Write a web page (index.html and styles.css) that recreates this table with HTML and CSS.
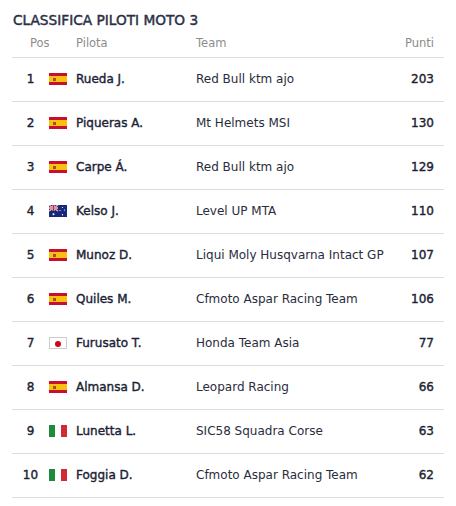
FILE: index.html
```html
<!DOCTYPE html>
<html>
<head>
<meta charset="utf-8">
<link rel="stylesheet" href="styles.css">
</head>
<body>
<div class="wrap">
  <h1 class="title">CLASSIFICA PILOTI MOTO 3</h1>
  <div class="row head">
    <div class="pos">Pos</div>
    <div class="flag-col"></div>
    <div class="name">Pilota</div>
    <div class="team">Team</div>
    <div class="pts">Punti</div>
  </div>

  <div class="row">
    <div class="pos">1</div>
    <div class="flag-col"><span class="flag es"><i class="coat"></i></span></div>
    <div class="name">Rueda J.</div>
    <div class="team">Red Bull ktm ajo</div>
    <div class="pts">203</div>
  </div>
  <div class="row">
    <div class="pos">2</div>
    <div class="flag-col"><span class="flag es"><i class="coat"></i></span></div>
    <div class="name">Piqueras A.</div>
    <div class="team">Mt Helmets MSI</div>
    <div class="pts">130</div>
  </div>
  <div class="row">
    <div class="pos">3</div>
    <div class="flag-col"><span class="flag es"><i class="coat"></i></span></div>
    <div class="name">Carpe Á.</div>
    <div class="team">Red Bull ktm ajo</div>
    <div class="pts">129</div>
  </div>
  <div class="row">
    <div class="pos">4</div>
    <div class="flag-col">
      <svg class="flag au" viewBox="0 0 36 24" width="18" height="12">
        <rect width="36" height="24" fill="#1a2a7a"/>
        <path d="M0 0L18 12M18 0L0 12" stroke="#fff" stroke-width="2.4"/>
        <path d="M0 0L18 12M18 0L0 12" stroke="#d0243a" stroke-width="1"/>
        <path d="M9 0V12M0 6H18" stroke="#fff" stroke-width="3.6"/>
        <path d="M9 0V12M0 6H18" stroke="#d0243a" stroke-width="2"/>
        <circle cx="9" cy="18.5" r="2" fill="#fff"/>
        <circle cx="27" cy="5" r="1.2" fill="#fff"/>
        <circle cx="22" cy="11" r="1.2" fill="#fff"/>
        <circle cx="31" cy="10" r="1.2" fill="#fff"/>
        <circle cx="27" cy="19.5" r="1.3" fill="#fff"/>
      </svg>
    </div>
    <div class="name">Kelso J.</div>
    <div class="team">Level UP MTA</div>
    <div class="pts">110</div>
  </div>
  <div class="row">
    <div class="pos">5</div>
    <div class="flag-col"><span class="flag es"><i class="coat"></i></span></div>
    <div class="name">Munoz D.</div>
    <div class="team">Liqui Moly Husqvarna Intact GP</div>
    <div class="pts">107</div>
  </div>
  <div class="row">
    <div class="pos">6</div>
    <div class="flag-col"><span class="flag es"><i class="coat"></i></span></div>
    <div class="name">Quiles M.</div>
    <div class="team">Cfmoto Aspar Racing Team</div>
    <div class="pts">106</div>
  </div>
  <div class="row">
    <div class="pos">7</div>
    <div class="flag-col"><span class="flag jp"><i class="sun"></i></span></div>
    <div class="name">Furusato T.</div>
    <div class="team">Honda Team Asia</div>
    <div class="pts">77</div>
  </div>
  <div class="row">
    <div class="pos">8</div>
    <div class="flag-col"><span class="flag es"><i class="coat"></i></span></div>
    <div class="name">Almansa D.</div>
    <div class="team">Leopard Racing</div>
    <div class="pts">66</div>
  </div>
  <div class="row">
    <div class="pos">9</div>
    <div class="flag-col"><span class="flag it"></span></div>
    <div class="name">Lunetta L.</div>
    <div class="team">SIC58 Squadra Corse</div>
    <div class="pts">63</div>
  </div>
  <div class="row">
    <div class="pos">10</div>
    <div class="flag-col"><span class="flag it"></span></div>
    <div class="name">Foggia D.</div>
    <div class="team">Cfmoto Aspar Racing Team</div>
    <div class="pts">62</div>
  </div>
</div>
</body>
</html>
```

FILE: styles.css
```css
* { box-sizing: border-box; }
html, body { margin: 0; padding: 0; background: #fff; }
body {
  font-family: "DejaVu Sans", Verdana, sans-serif;
  color: #1d1f36;
}
.wrap {
  padding: 10px 12px 0 12px;
}
.title {
  margin: 0 0 0 1px;
  font-size: 13.7px;
  font-weight: normal;
  color: #2b3047;
  -webkit-text-stroke: 0.45px #2b3047;
  line-height: 20px;
}
.row {
  display: grid;
  grid-template-columns: 37px 27px 120px 1fr 50px;
  align-items: center;
  height: 44px;
  padding-bottom: 1px;
  border-bottom: 1px solid #dcdcdc;
  font-size: 12px;
  color: #2a2c3d;
}
.row.head {
  height: 28px;
  color: #8c8c8c;
  font-size: 11.5px;
  align-items: start;
  padding-top: 6px;
  padding-bottom: 0;
}
.pos {
  text-align: center;
  color: #1d1f36;
  -webkit-text-stroke: 0.4px #1d1f36;
}
.head .pos {
  text-align: left;
  padding-left: 18px;
  color: #8c8c8c;
  -webkit-text-stroke: 0;
}
.name {
  color: #1d1f36;
  -webkit-text-stroke: 0.4px #1d1f36;
}
.head .name, .head .pts {
  color: #8c8c8c;
  -webkit-text-stroke: 0;
}
.pts {
  text-align: right;
  padding-right: 10px;
  color: #1d1f36;
  -webkit-text-stroke: 0.4px #1d1f36;
}
.flag {
  display: block;
  width: 18px;
  height: 12px;
  position: relative;
}
.flag.es {
  background: linear-gradient(#c8102e 0 25%, #f7c20e 25% 75%, #c8102e 75% 100%);
}
.flag.es .coat {
  position: absolute;
  left: 4px;
  top: 5px;
  width: 3px;
  height: 3px;
  background: #b0462a;
}
.flag.jp {
  background: #fff;
  border: 1px solid #ccc;
}
.flag.jp .sun {
  position: absolute;
  left: 5px;
  top: 3px;
  width: 6px;
  height: 6px;
  border-radius: 50%;
  background: #d0021b;
}
.flag.it {
  background: linear-gradient(90deg, #1f8a3c 0 33.3%, #fff 33.3% 66.6%, #ce2b37 66.6% 100%);
}
```
